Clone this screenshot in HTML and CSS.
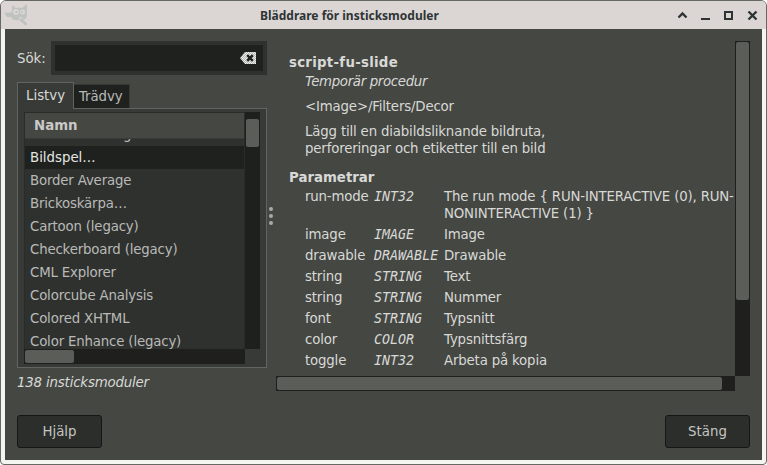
FILE: index.html
```html
<!DOCTYPE html>
<html lang="sv">
<head>
<meta charset="utf-8">
<title>Bläddrare för insticksmoduler</title>
<link rel="stylesheet" href="styles.css">
</head>
<body>
<div class="window">
  <header class="titlebar">
    <svg class="logo" width="24" height="22" viewBox="0 0 24 22"><path fill="#bfc2be" d="M7 1 11 4Q14 3 17 4L22 0V10Q22 15 18 16L22 19V21H20L14 16Q8 17 6 13L2 13Q0 11 0 8L3 9 7 8Z"/><circle cx="11" cy="8" r="3" fill="#dbd6d3"/><circle cx="17.500" cy="8" r="2.500" fill="#dbd6d3"/><circle cx="11.500" cy="8" r="1.200" fill="#bfc2be"/><circle cx="17" cy="8" r="1" fill="#bfc2be"/><path d="m14 13 4 1.500M15 14l-1 2" stroke="#dbd6d3" fill="none"/></svg>
    <h1>Bläddrare för insticksmoduler</h1>
    <svg class="controls" width="82" height="12" viewBox="0 0 82 12" fill="none" stroke="#2e3436"><path d="m1.500 8.500 4-4 4 4" stroke-width="2.400"/><path d="M24 10h9" stroke-width="2"/><path d="M48 3h7v7h-7z" stroke-width="2"/><path d="m71.500 2.500 8 8m0-8-8 8" stroke-width="2.400"/></svg>
  </header>
  <main class="content">
    <section class="browser">
      <div class="search"><span>Sök:</span><div class="entry"><svg width="16" height="12" viewBox="0 0 16 12"><defs><pattern id="weave" width="2" height="2" patternUnits="userSpaceOnUse"><path fill="#b4b6b2" d="M0 0h2v2H0z"/><path fill="#eeefec" d="M0 0h1v1H0zM1 1h1v1H1z"/></pattern></defs><path d="M0 6 5 0h11v12H5z" fill="url(#weave)"/><path d="m7.200 3.200 5.600 5.600m0-5.600-5.600 5.600" stroke="#1f211f" stroke-width="2.400"/></svg></div></div>
      <div class="tabs"><div class="tab active">Listvy</div><div class="tab">Trädvy</div></div>
      <div class="panel">
        <div class="list">
          <div class="head">Namn</div>
          <div class="rows">
            <div class="row clipped">Bildanvändning av markerade</div>
            <div class="row selected">Bildspel…</div>
            <div class="row">Border Average</div>
            <div class="row">Brickoskärpa…</div>
            <div class="row">Cartoon (legacy)</div>
            <div class="row">Checkerboard (legacy)</div>
            <div class="row">CML Explorer</div>
            <div class="row">Colorcube Analysis</div>
            <div class="row">Colored XHTML</div>
            <div class="row">Color Enhance (legacy)</div>
          </div>
        </div>
        <div class="vbar list-v"><i></i></div>
        <div class="hbar list-h"><i></i></div>
      </div>
      <div class="count">138 insticksmoduler</div>
    </section>
    <div class="grip"><i></i><i></i><i></i></div>
    <section class="details">
      <div class="info">
        <h2 class="name">script-fu-slide</h2>
        <p class="kind">Temporär procedur</p>
        <p class="path">&lt;Image&gt;/Filters/Decor</p>
        <p class="about">Lägg till en diabildsliknande bildruta,<br>perforeringar och etiketter till en bild</p>
        <h2>Parametrar</h2>
        <div class="params">
          <span>run-mode</span><em>INT32</em><span>The run mode { RUN-INTERACTIVE (0), RUN-<br>NONINTERACTIVE (1) }</span>
          <span>image</span><em>IMAGE</em><span>Image</span>
          <span>drawable</span><em>DRAWABLE</em><span>Drawable</span>
          <span>string</span><em>STRING</em><span>Text</span>
          <span>string</span><em>STRING</em><span>Nummer</span>
          <span>font</span><em>STRING</em><span>Typsnitt</span>
          <span>color</span><em>COLOR</em><span>Typsnittsfärg</span>
          <span>toggle</span><em>INT32</em><span>Arbeta på kopia</span>
        </div>
      </div>
      <div class="vbar info-v"><i></i></div>
      <div class="hbar info-h"><i></i></div>
    </section>
    <footer class="actions"><button>Hjälp</button><button>Stäng</button></footer>
  </main>
</div>
</body>
</html>
```
FILE: styles.css
```css
* { box-sizing: border-box; }
body { margin: 0; background: #fff; overflow: hidden; font: 13.333px/17px "DejaVu Sans", sans-serif; letter-spacing: -0.17px; color: #d8d9d6; }
h1, h2, p { margin: 0; }
svg, i { display: block; }
.window { width: 767px; height: 465px; border: 1px solid #666864; border-radius: 6px 6px 4px 4px; background: #f4f4f1; overflow: hidden; }
.titlebar { height: 28px; display: grid; grid-template-columns: 255px 1fr 89px; background: #dbd6d3; align-items: center; }
.logo { margin-left: 4px; }
h1 { font: bold 12px/17px "Noto Sans", sans-serif; letter-spacing: 0; color: #2e3436; padding-left: 4px; white-space: nowrap; }
.content { width: 757px; height: 431px; margin-left: 4px; background: #454743; display: grid; grid-template-columns: 262px 9px 486px; grid-template-rows: 362px 69px; }
.browser { padding: 12px 0 0 12px; }
.search { display: flex; height: 34px; align-items: center; justify-content: space-between; letter-spacing: 0; }
.entry { width: 216px; height: 34px; background: #1f211f; border: 4px solid #2f312f; display: flex; align-items: center; justify-content: flex-end; padding-right: 7px; }
.tabs { display: flex; align-items: flex-end; height: 33px; padding-top: 6px; letter-spacing: 0; }
.tab { height: 24px; padding: 3px 7px 0 5px; background: #1f211f; border: 1px solid #373936; border-left: 0; border-bottom: 0; color: #b9bab7; letter-spacing: -0.1px; }
.tab.active { position: relative; z-index: 1; width: 57px; height: 27px; margin-bottom: -1px; padding: 4px 0 0 8px; background: #383a37; border: 1px solid #626460; border-bottom: 0; color: #d8d9d6; letter-spacing: 0; }
.panel { width: 250px; height: 260px; border: 1px solid #626460; background: #383a37; padding: 3px 6px; display: grid; grid-template-columns: 221px 15px; grid-template-rows: 237px 15px; }
.list { border: 1px solid #2a2c2a; border-bottom: 0; background: #2f312f; overflow: hidden; }
.head { height: 26px; padding: 4px 9px; background: #454743; border-bottom: 1px solid #393b38; color: #c9cac7; font-weight: bold; letter-spacing: 0; }
.rows { height: 210px; overflow: hidden; }
.row { height: 23px; padding: 3px 5px; white-space: nowrap; color: #b9bab7; }
.row.clipped { margin-top: -16px; }
.row.selected { background: #1f211f; color: #e4e5e2; letter-spacing: 0; }
.vbar, .hbar { background: #1f1f1d; }
.vbar { padding: 0 1px; }
.hbar { padding: 1px 0; }
.vbar i, .hbar i { background: #5b5d59; border-radius: 2px; }
.list-v { padding-top: 7px; }
.list-v i { height: 28px; }
.list-h { padding-left: 1px; }
.list-h i { width: 49px; height: 13px; }
.count { margin-top: 6px; font-style: italic; }
.grip { display: flex; flex-direction: column; gap: 3px; padding: 178px 0 0 2px; }
.grip i { width: 4px; height: 4px; border-radius: 50%; background: #a9aaa7; }
.details { padding-top: 12px; display: grid; grid-template-columns: 459px 15px; grid-template-rows: 335px 15px; }
.info { padding: 13px 0 0 13px; overflow: hidden; }
h2 { font: bold 13.333px/17px "DejaVu Sans", sans-serif; letter-spacing: 0; }
.name { letter-spacing: 0.27px; }
.kind, .path, .about { padding-left: 16px; }
.kind { margin-top: 2px; font-style: italic; letter-spacing: -0.33px; }
.path, .about { margin-top: 8px; }
.about { margin-bottom: 12px; }
.params { margin: 2px 0 0 16px; display: grid; grid-template-columns: 69px 70px 300px; row-gap: 4px; white-space: nowrap; }
.params em { font-family: "DejaVu Sans Mono", monospace; letter-spacing: 0; }
.info-v { padding-top: 1px; }
.info-v i { height: 258px; }
.info-h { padding-left: 1px; }
.info-h i { width: 445px; height: 13px; }
.actions { grid-column: 1 / 4; display: flex; justify-content: space-between; padding: 24px 12px 0; }
button { width: 85px; height: 33px; padding: 0; border: 1px solid #151615; border-radius: 3px; background: #2c2e2b; color: #c4c5c2; font: 13.333px/17px "DejaVu Sans", sans-serif; }
```
